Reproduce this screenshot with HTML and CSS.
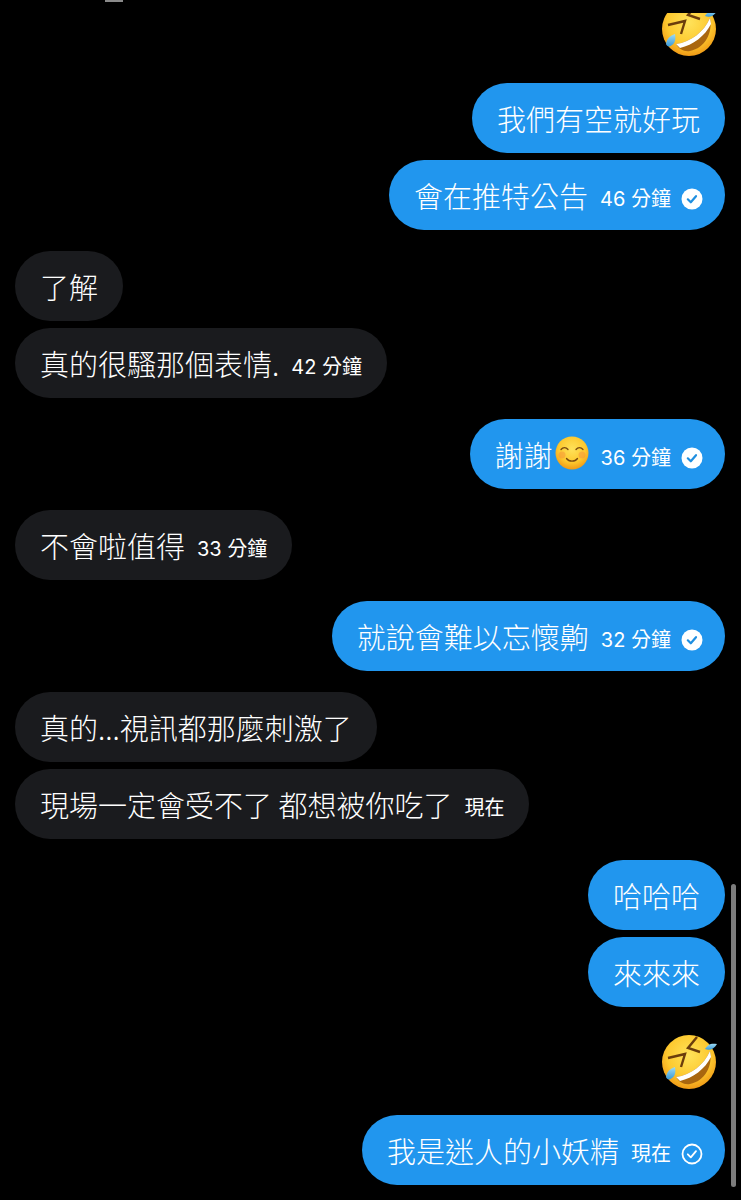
FILE: index.html
```html
<!DOCTYPE html>
<html lang="zh-Hant">
<head>
<meta charset="utf-8">
<title>Chat</title>
<link rel="stylesheet" href="styles.css">
</head>
<body>
<svg class="defs" width="0" height="0" aria-hidden="true">
  <defs>
    <radialGradient id="face" cx="50%" cy="38%" r="62%">
      <stop offset="0" stop-color="#ffe25a"/>
      <stop offset="0.65" stop-color="#fdc92f"/>
      <stop offset="1" stop-color="#f09a16"/>
    </radialGradient>
    <linearGradient id="tear" x1="0" y1="0" x2="0" y2="1">
      <stop offset="0" stop-color="#9fdcf5"/>
      <stop offset="1" stop-color="#3a9ad8"/>
    </linearGradient>
    <symbol id="rofl" viewBox="0 0 56 56">
      <circle cx="28" cy="28" r="27" fill="url(#face)"/>
      <path d="M15 43C30 41 43 31 49 17C52 32 44 47 29 50C23 51 18 48 15 43Z" fill="#a9660f"/>
      <path d="M15 43C30 41 43 31 49 17L50 23C44 35 32 44 19 47Z" fill="#fff"/>
      <path d="M12 21L27 17L22 34M26.500 11L37 24L29 8" fill="none" stroke="#6b3a0a" stroke-width="0"/>
      <path d="M7 24L24 20L20 33" fill="none" stroke="#6b3d0c" stroke-width="2.400" stroke-linejoin="miter"/>
      <path d="M36 3L27 14L39 18" fill="none" stroke="#6b3d0c" stroke-width="2.400"/>
      <path d="M46 14C49 9 52 8 58 9C55 14 51 16 46 14Z" fill="url(#tear)" transform="translate(-2 1)"/>
      <path d="M5 43C6 37 9 35 14 33C15 38 14 42 11 44C9 46 6 46 5 43Z" fill="url(#tear)"/>
    </symbol>
    <symbol id="smile" viewBox="0 0 34 34">
      <circle cx="17" cy="17" r="16.500" fill="url(#face)"/>
      <circle cx="7" cy="19" r="3.500" fill="#f58a3c" opacity="0.45"/>
      <circle cx="27" cy="19" r="3.500" fill="#f58a3c" opacity="0.45"/>
      <path d="M6 13.500C8 11 11 11 13 13.500M21 13.500C23 11 26 11 28 13.500" fill="none" stroke="#7a4a10" stroke-width="1.300" stroke-linecap="round"/>
      <path d="M11.500 22.500C14 26 20 26 22.500 22.500" fill="none" stroke="#7a4a10" stroke-width="1.300" stroke-linecap="round"/>
    </symbol>
    <symbol id="read" viewBox="0 0 22 22">
      <circle cx="11" cy="11" r="10.500" fill="#fff"/>
      <path d="M6.800 11.300L9.800 14.300L15 8.200" fill="none" stroke="#1f8fe0" stroke-width="2.200" stroke-linecap="round" stroke-linejoin="round"/>
    </symbol>
    <symbol id="sent" viewBox="0 0 22 22">
      <circle cx="11" cy="11" r="9.500" fill="none" stroke="#fff" stroke-width="1.800"/>
      <path d="M6.800 11.300L9.800 14.300L15 8.200" fill="none" stroke="#fff" stroke-width="1.800" stroke-linecap="round" stroke-linejoin="round"/>
    </symbol>
  </defs>
</svg>

<main class="chat">
  <div class="clip-emoji"><svg class="big-emoji"><use href="#rofl"/></svg></div>

  <div class="bubble me first-after-emoji">我們有空就好玩</div>
  <div class="bubble me tight">會在推特公告<span class="meta">46 分鐘</span><svg class="tick"><use href="#read"/></svg></div>

  <div class="bubble them gap">了解</div>
  <div class="bubble them tight">真的很騷那個表情.<span class="meta">42 分鐘</span></div>

  <div class="bubble me gap">謝謝<svg class="inline-emoji"><use href="#smile"/></svg><span class="meta">36 分鐘</span><svg class="tick"><use href="#read"/></svg></div>

  <div class="bubble them gap">不會啦值得<span class="meta">33 分鐘</span></div>

  <div class="bubble me gap">就說會難以忘懷齁<span class="meta">32 分鐘</span><svg class="tick"><use href="#read"/></svg></div>

  <div class="bubble them gap">真的...視訊都那麼刺激了</div>
  <div class="bubble them tight">現場一定會受不了 都想被你吃了<span class="meta">現在</span></div>

  <div class="bubble me gap">哈哈哈</div>
  <div class="bubble me tight">來來來</div>

  <svg class="big-emoji standalone"><use href="#rofl"/></svg>

  <div class="bubble me last">我是迷人的小妖精<span class="meta">現在</span><svg class="tick"><use href="#sent"/></svg></div>
</main>

<div class="top-dash"></div>
<div class="scrollbar"></div>
</body>
</html>
```
FILE: styles.css
```css
* { box-sizing: border-box; }

html, body {
  margin: 0;
  height: 1200px;
  background: #000;
  overflow: hidden;
}

body {
  position: relative;
  font-family: "Noto Sans CJK TC", "Noto Sans CJK SC", sans-serif;
  font-weight: 300;
  color: #fff;
}

.defs { position: absolute; }

.chat {
  display: flex;
  flex-direction: column;
  padding: 0 16px 0 15px;
}

.clip-emoji {
  height: 44px;
  margin-top: 13px;
  align-self: flex-end;
  overflow: hidden;
  display: flex;
  align-items: flex-end;
  margin-right: 8px;
}

.big-emoji {
  display: block;
  width: 56px;
  height: 56px;
  flex: none;
}

.standalone {
  align-self: flex-end;
  margin: 27px 8px 25px 0;
}

.bubble {
  height: 70px;
  border-radius: 35px;
  padding: 0 25px;
  display: flex;
  align-items: center;
  font-size: 29px;
  line-height: 1;
  white-space: pre;
}

.me {
  align-self: flex-end;
  background: #2196ee;
}

.them {
  align-self: flex-start;
  background: #1a1b1e;
}

.first-after-emoji { margin-top: 26px; }
.tight { margin-top: 7px; }
.gap { margin-top: 21px; }

.meta {
  font-family: "Inter", "Noto Sans CJK TC", sans-serif;
  font-weight: 400;
  font-size: 20px;
  margin-left: 12px;
  margin-top: 8px;
  white-space: pre;
}

.tick {
  width: 22px;
  height: 22px;
  margin-left: 10px;
  margin-right: -3px;
  margin-top: 8px;
  flex: none;
}

.inline-emoji {
  width: 34px;
  height: 34px;
  margin-left: 2px;
  margin-top: -2px;
  flex: none;
}

.top-dash {
  position: absolute;
  left: 105px;
  top: 0;
  width: 18px;
  height: 2px;
  background: #8a8a8a;
}

.scrollbar {
  position: absolute;
  left: 731px;
  top: 884px;
  width: 5px;
  height: 303px;
  border-radius: 3px;
  background: #7c7c7c;
}
```
